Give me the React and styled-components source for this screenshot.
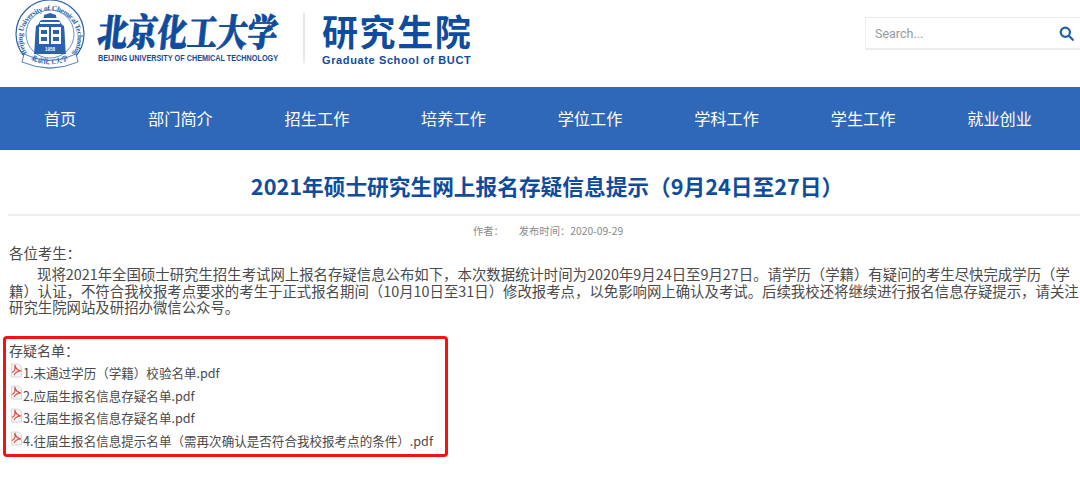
import styled, { createGlobalStyle } from "styled-components";

const Global = createGlobalStyle`
	html, body { margin: 0; padding: 0; background: #fff; overflow: hidden; }
	body { font-family: "Noto Sans CJK SC", "Noto Sans", sans-serif; color: #444; }
`;

const Page = styled.div`
	width: 1080px;
	height: 487px;
	overflow: hidden;
`;

const Header = styled.header`
	display: flex;
	align-items: flex-start;
	height: 87px;
`;

const Seal = styled.svg`
	width: 72px;
	height: 70px;
	margin: 0 0 0 14px;
	flex: none;
`;

const Brand = styled.div`
	display: flex;
	flex-direction: column;
	margin: 8px 0 0 12px;
	width: 181px;
	color: #0f4c9e;
`;

const BrandName = styled.div`
	font-family: "Noto Serif CJK SC", "Noto Sans CJK SC", serif;
	font-size: 30px;
	line-height: 44px;
	font-weight: 900;
	white-space: nowrap;
	-webkit-text-stroke: 0.7px #0f4c9e;
	transform: skewX(-6deg) scaleY(1.25);
`;

const BrandEn = styled.div`
	font-family: "Liberation Sans", sans-serif;
	font-size: 8.6px;
	font-weight: 700;
	line-height: 12px;
	white-space: nowrap;
	transform: scaleX(0.845);
	transform-origin: left center;
`;

const Divider = styled.div`
	width: 2px;
	height: 50px;
	margin: 13px 0 0 24px;
	background: #e8e8e8;
`;

const School = styled.div`
	margin: 8px 0 0 17px;
	color: #0f4c9e;
`;

const SchoolName = styled.div`
	font-size: 36px;
	line-height: 44px;
	font-weight: 700;
	letter-spacing: 1.6px;
	white-space: nowrap;
`;

const SchoolEn = styled.div`
	font-family: "Liberation Sans", sans-serif;
	font-size: 11px;
	font-weight: 700;
	line-height: 16px;
	letter-spacing: 0.62px;
	white-space: nowrap;
`;

const Search = styled.div`
	display: flex;
	align-items: center;
	justify-content: space-between;
	box-sizing: border-box;
	width: 220px;
	height: 33px;
	margin: 17px -5px 0 auto;
	padding: 0 10px 0 9px;
	border: 1px solid #ececec;
	border-bottom-width: 2px;
	font-family: Roboto, sans-serif;
	font-size: 12.5px;
	color: #999;
`;

const Nav = styled.nav`
	display: flex;
	align-items: center;
	box-sizing: border-box;
	height: 63px;
	padding: 0 0 2px 8px;
	background: #3068b9;
`;

const NavItem = styled.a`
	padding: 0 35.9px;
	font-size: 16.2px;
	color: #fff;
	white-space: nowrap;
`;

const Title = styled.h1`
	margin: 0 0 0 8px;
	padding: 21px 0 14px 6px;
	border-bottom: 2px solid #eeeeee;
	font-size: 21.7px;
	line-height: 29px;
	font-weight: 700;
	color: #0f4c9e;
	text-align: center;
	white-space: nowrap;
`;

const Meta = styled.div`
	display: flex;
	justify-content: center;
	gap: 15px;
	margin: 7px 0 0 16px;
	font-size: 10.3px;
	line-height: 16px;
	color: #8a8a8a;
`;

const Content = styled.div`
	margin: 3px 0 0 9px;
	font-size: 14.4px;
	color: #4a4a4a;
`;

const Greeting = styled.div`
	line-height: 22px;
	margin-bottom: 2px;
`;

const Line = styled.div`
	line-height: 16.5px;
	white-space: nowrap;
	text-indent: ${(props) => (props.$indent ? "28px" : "0")};
`;

const RedBox = styled.section`
	box-sizing: border-box;
	width: 445px;
	height: 121px;
	margin: 20px 0 0 3px;
	padding: 0 0 0 3px;
	border: 3px solid #f3120f;
	border-radius: 4px;
	font-size: 12.55px;
	color: #4a4a4a;
`;

const BoxTitle = styled.div`
	font-size: 14px;
	line-height: 22px;
	margin-bottom: 1px;
`;

const FileRow = styled.div`
	display: flex;
	align-items: center;
	height: 22.6px;
	white-space: nowrap;
`;

const PdfIcon = () => (
	<svg width="13" height="16" viewBox="0 0 13 16" style={{ flex: "none", marginBottom: 4, marginLeft: 1 }}>
		<path d="M1.5 1h7l3 3v10h-10z" fill="#f6f6f6" stroke="#d6d6d6" strokeWidth="1" />
		<path d="M2 9.500c2.500-1 3.500-4 2.700-7.500 1 3.500 2.500 5.500 6.300 6-3 0-5.500 1-7 4" fill="none" stroke="#e0453f" strokeWidth="1.2" />
	</svg>
);

const files = [
	"1.未通过学历（学籍）校验名单.pdf",
	"2.应届生报名信息存疑名单.pdf",
	"3.往届生报名信息存疑名单.pdf",
	"4.往届生报名信息提示名单（需再次确认是否符合我校报考点的条件）.pdf",
];

const nav = ["首页", "部门简介", "招生工作", "培养工作", "学位工作", "学科工作", "学生工作", "就业创业"];

function App() {
	return (
		<Page>
			<Global />
			<Header>
				<Seal viewBox="0 0 72 70">
					<circle cx="36" cy="34" r="34" fill="none" stroke="#2a62ad" strokeWidth="1.2" />
					<circle cx="36" cy="34" r="24" fill="none" stroke="#2a62ad" strokeWidth="0.7" />
					<defs>
						<path id="ring" d="M13 53A27.500 27.500 0 1 1 59 53" />
						<path id="ribbon" d="M14 58Q36 70 58 58" />
					</defs>
					<text fontFamily="Liberation Serif" fontSize="7.4" fontWeight="700" fill="#2a62ad" textLength="122">
						<textPath href="#ring">Beijing University of Chemical Technology</textPath>
					</text>
					<path d="M20 54c1-8 1-20 2-28 2-1 3-2 4-5 3-1 4-3 4-6l6-2 6 2c0 3 1 5 4 6 1 3 2 4 4 5 1 8 1 20 2 28z" fill="#2a62ad" />
					<rect x="25" y="27" width="10" height="17" fill="#fff" />
					<rect x="37" y="27" width="10" height="17" fill="#fff" />
					<rect x="28" y="18" width="16" height="2" fill="#fff" />
					<rect x="26" y="22" width="20" height="2" fill="#fff" />
					<rect x="27" y="30" width="6" height="4" fill="#2a62ad" />
					<rect x="27" y="37" width="6" height="4" fill="#2a62ad" />
					<rect x="39" y="30" width="6" height="4" fill="#2a62ad" />
					<rect x="39" y="37" width="6" height="4" fill="#2a62ad" />
					<text x="36" y="51" textAnchor="middle" fontFamily="Liberation Sans" fontSize="4.5" fontWeight="700" fill="#fff">1958</text>
					<path d="M10 54q26 13 52 0l2 8q-28 12-56 0z" fill="#fff" stroke="#2a62ad" strokeWidth="0.8" />
					<text fontFamily="Noto Serif CJK SC, serif" fontSize="6.5" fontWeight="900" fill="#2a62ad">
						<textPath href="#ribbon" startOffset="3">北京化工大学</textPath>
					</text>
				</Seal>
				<Brand>
					<BrandName>北京化工大学</BrandName>
					<BrandEn>BEIJING UNIVERSITY OF CHEMICAL TECHNOLOGY</BrandEn>
				</Brand>
				<Divider />
				<School>
					<SchoolName>研究生院</SchoolName>
					<SchoolEn>Graduate School of BUCT</SchoolEn>
				</School>
				<Search>
					<span>Search...</span>
					<svg width="15" height="15" viewBox="0 0 15 15" fill="none" stroke="#1f5fa8" strokeWidth="2.2">
						<circle cx="6.3" cy="6.3" r="4.6" />
						<path d="M9.8 9.8l4 4" strokeLinecap="round" />
					</svg>
				</Search>
			</Header>
			<Nav>
				{nav.map((n) => (
					<NavItem key={n}>{n}</NavItem>
				))}
			</Nav>
			<Title>2021年硕士研究生网上报名存疑信息提示（9月24日至27日）</Title>
			<Meta>
				<span>作者：</span>
				<span>发布时间：2020-09-29</span>
			</Meta>
			<Content>
				<Greeting>各位考生：</Greeting>
				<Line $indent>现将2021年全国硕士研究生招生考试网上报名存疑信息公布如下，本次数据统计时间为2020年9月24日至9月27日。请学历（学籍）有疑问的考生尽快完成学历（学</Line>
				<Line>籍）认证，不符合我校报考点要求的考生于正式报名期间（10月10日至31日）修改报考点，以免影响网上确认及考试。后续我校还将继续进行报名信息存疑提示，请关注</Line>
				<Line>研究生院网站及研招办微信公众号。</Line>
			</Content>
			<RedBox>
				<BoxTitle>存疑名单：</BoxTitle>
				{files.map((f) => (
					<FileRow key={f}>
						<PdfIcon />
						<span>{f}</span>
					</FileRow>
				))}
			</RedBox>
		</Page>
	);
}

export default App;
